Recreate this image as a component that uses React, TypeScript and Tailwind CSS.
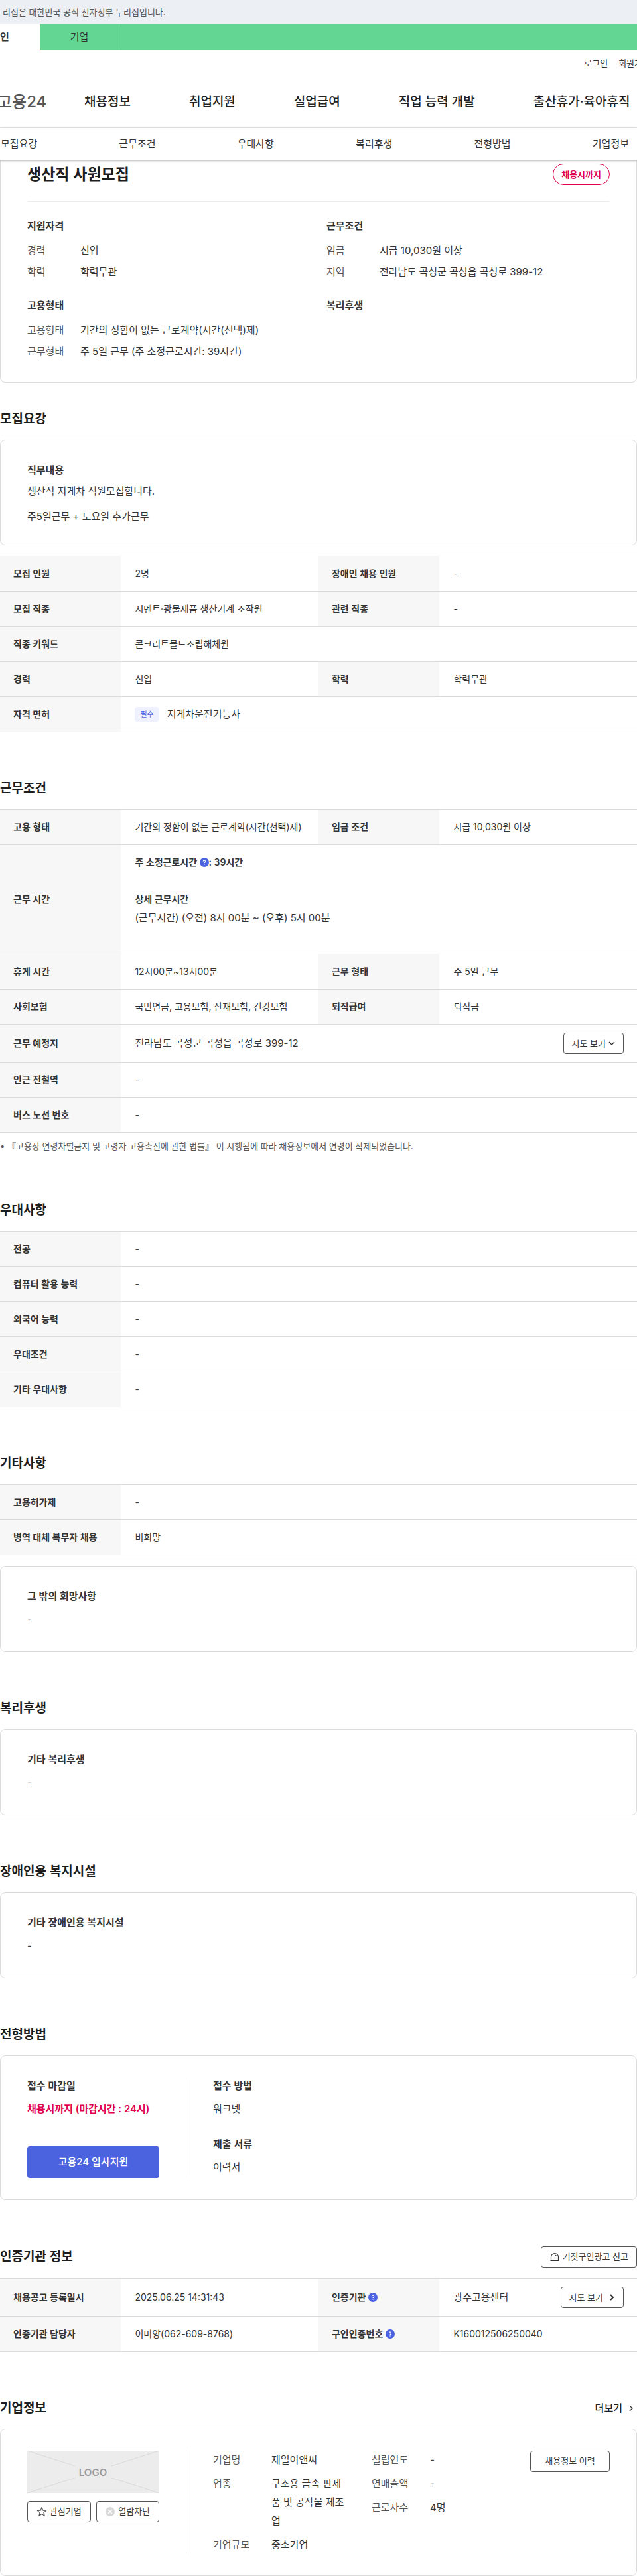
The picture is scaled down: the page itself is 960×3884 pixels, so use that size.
import type { ReactNode } from 'react'

type Cell = { label: ReactNode; value: ReactNode }

const mainMenu = ['채용정보', '취업지원', '실업급여', '직업 능력 개발', '출산휴가·육아휴직']
const tabs = ['모집요강', '근무조건', '우대사항', '복리후생', '전형방법', '기업정보']

const summary = [
	{ title: '지원자격', items: [['경력', '신입'], ['학력', '학력무관']] },
	{ title: '근무조건', items: [['임금', '시급 10,030원 이상'], ['지역', '전라남도 곡성군 곡성읍 곡성로 399-12']] },
	{ title: '고용형태', items: [['고용형태', '기간의 정함이 없는 근로계약(시간(선택)제)'], ['근무형태', '주 5일 근무 (주 소정근로시간: 39시간)']] },
	{ title: '복리후생', items: [] }
]

const smallButton = 'flex h-8 items-center justify-center rounded border border-[#555] bg-white text-[13px] text-[#333]'

const HelpIcon = () => (
	<svg viewBox="0 0 14 14" className="inline-block size-[14px] align-[-2px]" aria-hidden="true">
		<circle cx="7" cy="7" r="7" fill="#4c63e0" />
		<path d="M5.4 5.6a1.6 1.6 0 1 1 2.5 1.3c-.6.4-.9.6-.9 1.2" fill="none" stroke="#fff" strokeWidth="1.2" />
		<circle cx="7" cy="10" r=".75" fill="#fff" />
	</svg>
)

const Chevron = (props: { down?: boolean; bold?: boolean }) => (
	<svg viewBox="0 0 10 10" className="size-[10px]" fill="none" stroke="#333" strokeWidth={props.bold ? 2 : 1.3} aria-hidden="true">
		{props.down ? <path d="M1 3l4 4 4-4" /> : <path d="M3 1l4 4-4 4" />}
	</svg>
)

function Heading(props: { title: string; children?: ReactNode }) {
	return (
		<div className="mb-4 flex items-center justify-between">
			<h2 className="text-[19px] leading-[30px] font-semibold text-[#1d1d1d]">{props.title}</h2>
			{props.children}
		</div>
	)
}

function InfoTable(props: { rows: Cell[][] }) {
	return (
		<table className="w-full table-fixed border-separate border-spacing-0 border-t border-[#dbdbdb] text-left text-[14px] leading-7 text-[#333]">
			<colgroup>
				<col className="w-[19%]" />
				<col className="w-[31%]" />
				<col className="w-[19%]" />
				<col className="w-[31%]" />
			</colgroup>
			<tbody>
				{props.rows.map((row, index) => (
					<tr key={index}>
						{row.map((cell, cellIndex) => [
							<th key={`label-${cellIndex}`} scope="row" className="border-b border-[#dbdbdb] bg-[#f7f7f7] px-5 py-3 font-semibold whitespace-nowrap">{cell.label}</th>,
							<td key={`value-${cellIndex}`} colSpan={row.length === 1 ? 3 : 1} className="border-b border-[#dbdbdb] py-3 pr-5 pl-[21px]">{cell.value}</td>
						])}
					</tr>
				))}
			</tbody>
		</table>
	)
}

function NoteCard(props: { title: string }) {
	return (
		<div className="rounded-lg border border-[#dbdbdb] px-10 pt-8 pb-[34px] text-[15px] text-[#333]">
			<h3 className="leading-[26px] font-semibold">{props.title}</h3>
			<p className="mt-2 leading-7">-</p>
		</div>
	)
}

const recruitRows: Cell[][] = [
	[{ label: '모집 인원', value: '2명' }, { label: '장애인 채용 인원', value: '-' }],
	[{ label: '모집 직종', value: '시멘트·광물제품 생산기계 조작원' }, { label: '관련 직종', value: '-' }],
	[{ label: '직종 키워드', value: '콘크리트몰드조립해체원' }],
	[{ label: '경력', value: '신입' }, { label: '학력', value: '학력무관' }],
	[{
		label: '자격 면허',
		value: (
			<div className="flex items-center gap-3">
				<span className="rounded bg-[#f0f1fe] px-2 text-[11px] leading-[22px] text-[#4c63e0]">필수</span>
				<span className="text-[15px]">지게차운전기능사</span>
			</div>
		)
	}]
]

const conditionRows: Cell[][] = [
	[{ label: '고용 형태', value: <span className="whitespace-nowrap">기간의 정함이 없는 근로계약(시간(선택)제)</span> }, { label: '임금 조건', value: '시급 10,030원 이상' }],
	[{
		label: '근무 시간',
		value: (
			<div className="pb-7">
				<strong className="block pb-7 font-semibold">주 소정근로시간 <HelpIcon />: 39시간</strong>
				<strong className="block font-semibold">상세 근무시간</strong>
				<p className="text-[15px]">(근무시간) (오전) 8시 00분 ~ (오후) 5시 00분</p>
			</div>
		)
	}],
	[{ label: '휴게 시간', value: '12시00분~13시00분' }, { label: '근무 형태', value: '주 5일 근무' }],
	[{ label: '사회보험', value: '국민연금, 고용보험, 산재보험, 건강보험' }, { label: '퇴직급여', value: '퇴직금' }],
	[{
		label: '근무 예정지',
		value: (
			<div className="flex items-center justify-between">
				<span className="text-[15px]">전라남도 곡성군 곡성읍 곡성로 399-12</span>
				<button type="button" className={`${smallButton} gap-1 px-3`}>지도 보기 <Chevron down /></button>
			</div>
		)
	}],
	[{ label: '인근 전철역', value: '-' }],
	[{ label: '버스 노선 번호', value: '-' }]
]

const preferRows: Cell[][] = ['전공', '컴퓨터 활용 능력', '외국어 능력', '우대조건', '기타 우대사항'].map((label) => [{ label, value: '-' }])

const etcRows: Cell[][] = [
	[{ label: '고용허가제', value: '-' }],
	[{ label: '병역 대체 복무자 채용', value: '비희망' }]
]

const agencyRows: Cell[][] = [
	[
		{ label: '채용공고 등록일시', value: '2025.06.25 14:31:43' },
		{
			label: <>인증기관 <HelpIcon /></>,
			value: (
				<div className="flex items-center justify-between">
					<span className="text-[15px]">광주고용센터</span>
					<button type="button" className={`${smallButton} gap-2 px-3`}>지도 보기 <Chevron bold /></button>
				</div>
			)
		}
	],
	[{ label: '인증기관 담당자', value: '이미양(062-609-8768)' }, { label: <>구인인증번호 <HelpIcon /></>, value: 'K160012506250040' }]
]

function Facts(props: { items: string[][] }) {
	return (
		<dl className="flex min-w-0 flex-col gap-2 leading-7">
			{props.items.map(([label, value]) => (
				<div key={label} className="flex">
					<dt className="w-[88px] shrink-0 text-[#555]">{label}</dt>
					<dd className="break-all text-[#333]">{value}</dd>
				</div>
			))}
		</dl>
	)
}

function Header() {
	return (
		<header className="overflow-hidden whitespace-nowrap">
			<div className="h-9 bg-[#ecf0f5] text-[13px] leading-9 text-[#555]">
				<p className="-ml-2">누리집은 대한민국 공식 전자정부 누리집입니다.</p>
			</div>
			<nav className="bg-[#63d694]">
				<div className="-ml-[60px] flex h-10 text-center text-[15px] leading-10 text-[#333]">
					<a href="#" className="w-[120px] bg-white font-semibold">개인</a>
					<a href="#" className="w-[120px] border-r border-[#52c583]">기업</a>
				</div>
			</nav>
			<div className="-mr-5 flex h-10 items-center justify-end gap-4 text-[13px] text-[#333]">
				<a href="#">로그인</a>
				<a href="#">회원가입</a>
			</div>
			<div className="flex h-[77px] items-center border-b border-[#ececec]">
				<a href="#" className="-ml-1 w-[131px] text-[24px] font-medium text-[#555]">고용24</a>
				<nav className="flex gap-[88px] text-[19px] font-medium text-[#222]">
					{mainMenu.map((item) => <a key={item} href="#">{item}</a>)}
				</nav>
			</div>
		</header>
	)
}

export default function App() {
	return (
		<div className="bg-white font-['Inter','Noto_Sans_CJK_KR',sans-serif] break-keep">
			<Header />
			<nav className="relative flex h-12 items-center justify-between bg-white pr-3 pl-px text-[15px] text-[#333] shadow-[0_1px_4px_rgba(0,0,0,0.3)]">
				{tabs.map((item) => <a key={item} href="#">{item}</a>)}
			</nav>

			<main>
				<section className="rounded-b-lg border border-t-0 border-[#dbdbdb] px-10 pt-[6px] pb-[34px] text-[15px]">
					<div className="flex items-center justify-between border-b border-[#ececec] pb-6">
						<h1 className="text-[23px] leading-8 font-semibold text-[#1d1d1d]">생산직 사원모집</h1>
						<span className="rounded-full border border-[#e0004f] px-3 text-[13px] leading-[30px] font-semibold text-[#e0004f]">채용시까지</span>
					</div>
					<div className="mt-6 grid grid-cols-2 gap-x-6 gap-y-[26px]">
						{summary.map((group) => (
							<div key={group.title}>
								<h3 className="mb-3 leading-[26px] font-semibold text-[#333]">{group.title}</h3>
								<dl className="flex flex-col gap-2 leading-6">
									{group.items.map(([label, value]) => (
										<div key={label} className="flex">
											<dt className="w-20 text-[#555]">{label}</dt>
											<dd className="text-[#333]">{value}</dd>
										</div>
									))}
								</dl>
							</div>
						))}
					</div>
				</section>

				<section className="mt-10">
					<Heading title="모집요강" />
					<div className="mb-4 rounded-lg border border-[#dbdbdb] px-10 pt-8 pb-[30px] text-[15px] leading-6 text-[#333]">
						<h3 className="mb-[7px] leading-[26px] font-semibold">직무내용</h3>
						<p className="mb-[14px]">생산직 지게차 직원모집합니다.</p>
						<p>주5일근무 + 토요일 추가근무</p>
					</div>
					<InfoTable rows={recruitRows} />
				</section>

				<section className="mt-[70px]">
					<Heading title="근무조건" />
					<InfoTable rows={conditionRows} />
					<p className="mt-2 text-[13px] leading-6 text-[#555]">• 『고용상 연령차별금지 및 고령자 고용촉진에 관한 법률』 이 시행됨에 따라 채용정보에서 연령이 삭제되었습니다.</p>
				</section>

				<section className="mt-[70px]">
					<Heading title="우대사항" />
					<InfoTable rows={preferRows} />
				</section>

				<section className="mt-[70px]">
					<Heading title="기타사항" />
					<div className="mb-4"><InfoTable rows={etcRows} /></div>
					<NoteCard title="그 밖의 희망사항" />
				</section>

				<section className="mt-[70px]">
					<Heading title="복리후생" />
					<NoteCard title="기타 복리후생" />
				</section>

				<section className="mt-[70px]">
					<Heading title="장애인용 복지시설" />
					<NoteCard title="기타 장애인용 복지시설" />
				</section>

				<section className="mt-[70px]">
					<Heading title="전형방법" />
					<div className="flex rounded-lg border border-[#dbdbdb] px-10 py-8 text-[15px] text-[#333]">
						<div className="flex h-[152px] w-[240px] shrink-0 flex-col border-r border-[#ececec] pr-10">
							<h3 className="leading-[26px] font-semibold">접수 마감일</h3>
							<p className="mt-2 leading-7 font-semibold whitespace-nowrap text-[#e0004f]">채용시까지 (마감시간 : 24시)</p>
							<button type="button" className="mt-auto h-12 rounded bg-[#4c63e0] font-medium text-white">고용24 입사지원</button>
						</div>
						<div className="pl-10">
							<h3 className="leading-[26px] font-semibold">접수 방법</h3>
							<p className="mt-2 leading-7">워크넷</p>
							<h3 className="mt-[26px] leading-[26px] font-semibold">제출 서류</h3>
							<p className="mt-2 leading-7">이력서</p>
						</div>
					</div>
				</section>

				<section className="mt-[70px]">
					<Heading title="인증기관 정보">
						<button type="button" className={`${smallButton} gap-1 px-3`}>
							<svg viewBox="0 0 16 16" className="size-4" fill="none" stroke="#333" strokeWidth="1.2" aria-hidden="true">
								<path d="M1.5 13.5h13M2.5 13.5V8a5.5 5.5 0 0 1 11 0v5.5M8.8 5c1.1.3 1.8 1 2 2" />
							</svg>
							거짓구인광고 신고
						</button>
					</Heading>
					<InfoTable rows={agencyRows} />
				</section>

				<section className="mt-[70px]">
					<Heading title="기업정보">
						<a href="#" className="flex items-center gap-2 pr-1 text-[15px] font-medium text-[#222]">더보기 <Chevron /></a>
					</Heading>
					<div className="flex rounded-lg border border-[#dbdbdb] px-10 py-8 text-[15px]">
						<div className="w-[240px] shrink-0 border-r border-[#ececec] pr-10">
							<svg viewBox="0 0 199 64" className="w-full bg-[#ececec]" role="img" aria-label="LOGO">
								<path d="M0 0l72 23M199 0l-72 23M0 64l72-23M199 64l-72-23" stroke="#d8d8d8" />
								<text x="99" y="38" textAnchor="middle" fontSize="15" fontWeight="600" fill="#999">LOGO</text>
							</svg>
							<div className="mt-3 grid grid-cols-2 gap-2">
								<button type="button" className={`${smallButton} gap-1 whitespace-nowrap`}>
									<svg viewBox="0 0 16 16" className="size-4 shrink-0" fill="none" stroke="#555" strokeWidth="1.2" strokeLinejoin="round" aria-hidden="true">
										<path d="M8 1.5l1.8 4.6 4.9.3-3.8 3.1 1.3 4.8L8 11.6l-4.2 2.7 1.3-4.8-3.8-3.1 4.9-.3z" />
									</svg>
									관심기업
								</button>
								<button type="button" className={`${smallButton} gap-1 whitespace-nowrap`}>
									<svg viewBox="0 0 16 16" className="size-4 shrink-0" aria-hidden="true">
										<circle cx="8" cy="8" r="7" fill="#d8d8d8" />
										<path d="M5 5l6 6M11 5l-6 6" stroke="#fff" strokeWidth="1.6" />
									</svg>
									열람차단
								</button>
							</div>
						</div>
						<div className="grid flex-1 grid-cols-[1fr_1fr_120px] items-start gap-10 pl-10">
							<Facts items={[['기업명', '제일이앤씨'], ['업종', '구조용 금속 판제품 및 공작물 제조업'], ['기업규모', '중소기업']]} />
							<Facts items={[['설립연도', '-'], ['연매출액', '-'], ['근로자수', '4명']]} />
							<button type="button" className={smallButton}>채용정보 이력</button>
						</div>
					</div>
				</section>
			</main>
		</div>
	)
}
